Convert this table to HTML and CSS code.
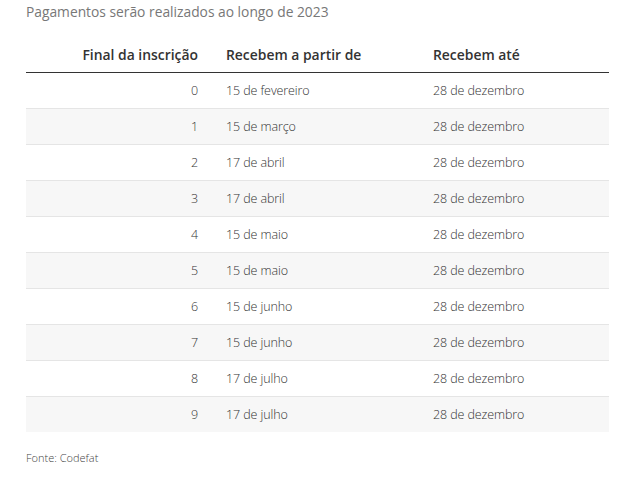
FILE: index.html
```html
<!DOCTYPE html>
<html lang="pt">
<head>
<meta charset="utf-8">
<link rel="stylesheet" href="styles.css">
</head>
<body>
<div class="wrap">
  <p class="subtitle">Pagamentos serão realizados ao longo de 2023</p>
  <table class="tbl">
    <thead>
      <tr>
        <th class="c1">Final da inscrição</th>
        <th class="c2">Recebem a partir de</th>
        <th class="c3">Recebem até</th>
      </tr>
    </thead>
    <tbody>
      <tr><td class="c1">0</td><td class="c2">15 de fevereiro</td><td class="c3">28 de dezembro</td></tr>
      <tr><td class="c1">1</td><td class="c2">15 de março</td><td class="c3">28 de dezembro</td></tr>
      <tr><td class="c1">2</td><td class="c2">17 de abril</td><td class="c3">28 de dezembro</td></tr>
      <tr><td class="c1">3</td><td class="c2">17 de abril</td><td class="c3">28 de dezembro</td></tr>
      <tr><td class="c1">4</td><td class="c2">15 de maio</td><td class="c3">28 de dezembro</td></tr>
      <tr><td class="c1">5</td><td class="c2">15 de maio</td><td class="c3">28 de dezembro</td></tr>
      <tr><td class="c1">6</td><td class="c2">15 de junho</td><td class="c3">28 de dezembro</td></tr>
      <tr><td class="c1">7</td><td class="c2">15 de junho</td><td class="c3">28 de dezembro</td></tr>
      <tr><td class="c1">8</td><td class="c2">17 de julho</td><td class="c3">28 de dezembro</td></tr>
      <tr><td class="c1">9</td><td class="c2">17 de julho</td><td class="c3">28 de dezembro</td></tr>
    </tbody>
  </table>
  <p class="source">Fonte: Codefat</p>
</div>
</body>
</html>
```

FILE: styles.css
```css
html, body {
  margin: 0;
  padding: 0;
  background: #ffffff;
}
body {
  font-family: "Open Sans", "Liberation Sans", sans-serif;
  color: #333333;
}
.wrap {
  padding: 0 18px 0 26px;
}
.subtitle {
  margin: 0;
  padding-top: 2px;
  font-size: 13.8px;
  line-height: 20px;
  color: #777777;
}
.tbl {
  width: 583px;
  margin-top: 15px;
  border-collapse: collapse;
}
.tbl th {
  font-size: 13.9px;
  font-weight: 600;
  color: #333333;
  height: 35px;
  padding: 0;
  vertical-align: middle;
  border-bottom: 1px solid #333333;
}
.tbl td {
  font-size: 12.5px;
  font-weight: 300;
  color: #333333;
  height: 35px;
  padding: 0;
  vertical-align: middle;
  border-bottom: 1px solid #e5e5e5;
  letter-spacing: -0.1px;
}
.tbl tbody tr:nth-child(even) td {
  background: #f7f7f7;
}
.tbl tbody tr:last-child td {
  border-bottom: none;
}
.c1 {
  width: 172px;
  text-align: right;
}
.tbl th.c2, .tbl td.c2 {
  width: 207px;
  text-align: left;
  padding-left: 28px;
}
.tbl th.c3, .tbl td.c3 {
  text-align: left;
}
.source {
  margin: 18px 0 0;
  font-size: 11px;
  font-weight: 300;
  color: #444444;
}
```
